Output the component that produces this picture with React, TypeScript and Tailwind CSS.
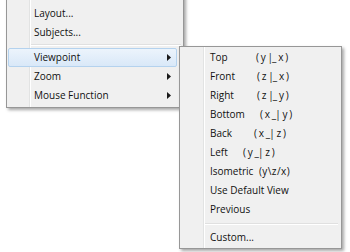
import { Fragment } from 'react';

type MenuItem = {
  label: string;
  sub?: boolean;
  active?: boolean;
  sep?: boolean;
};

type ViewItem = {
  label: string;
  axes?: string;
  labelWidth?: string;
  sep?: boolean;
};

const mainItems: MenuItem[] = [
  { label: 'Layout...' },
  { label: 'Subjects...' },
  { label: '', sep: true },
  { label: 'Viewpoint', sub: true, active: true },
  { label: 'Zoom', sub: true },
  { label: 'Mouse Function', sub: true },
];

const viewItems: ViewItem[] = [
  { label: 'Top', axes: '(y|_x)', labelWidth: 'w-[46px]' },
  { label: 'Front', axes: '(z|_x)', labelWidth: 'w-[47px]' },
  { label: 'Right', axes: '(z|_y)', labelWidth: 'w-[47px]' },
  { label: 'Bottom', axes: '(x_|y)', labelWidth: 'w-[50px]' },
  { label: 'Back', axes: '(x_|z)', labelWidth: 'w-[44px]' },
  { label: 'Left', axes: '(y_|z)', labelWidth: 'w-[33px]' },
  { label: 'Isometric', axes: '(y\\z/x)', labelWidth: 'w-[49px]' },
  { label: 'Use Default View' },
  { label: 'Previous' },
  { label: '', sep: true },
  { label: 'Custom...' },
];

// the |_ pairs sit tight together, the rest is spaced out
function Axes({ text }: { text: string }) {
  const chars = text.split('');
  const iso = text.includes('/');
  return (
    <span className="shrink-0 whitespace-nowrap">
      {chars.map((c, i) => {
        const next = chars[i + 1];
        const tight = (c === '|' && next === '_') || (c === '_' && next === '|');
        const cls = iso ? 'tracking-[0.4px]' : tight ? 'tracking-[-1px]' : 'tracking-[1.8px]';
        return (
          <span key={i} className={cls}>
            {c}
          </span>
        );
      })}
    </span>
  );
}

function Arrow() {
  return (
    <svg width="4" height="7" viewBox="0 0 4 7" className="shrink-0">
      <path d="M0 0 L4 3.5 L0 7 Z" fill="#1a1a1a" />
    </svg>
  );
}

export default function App() {
  return (
    <div
      className="relative w-[350px] h-[252px] overflow-hidden bg-white text-[10px] font-medium text-[#111]"
      style={{ fontFamily: '"Open Sans", "Noto Sans", sans-serif' }}
    >
      {/* main context menu */}
      <div className="absolute left-[6px] top-[-10px] w-[178px] border border-[#979797] bg-[#f0f0f0] pt-[13px] pb-[2px] shadow-[2px_2px_3px_rgba(0,0,0,0.35)]">
        <div className="absolute left-[22px] top-0 bottom-0 w-[2px] border-l border-[#e2e3e3] bg-white" />
        {mainItems.map((item, i) =>
          item.sep ? (
            <div key={i} className="relative h-[6px] ml-[24px] mr-[2px] flex items-center">
              <div className="w-full h-[2px] border-t border-[#e0e0e0] bg-white" />
            </div>
          ) : (
            <div
              key={i}
              className={
                item.active
                  ? 'relative h-[19px] ml-[1px] mr-[6px] flex items-center pl-[25px] pr-[5px] rounded-[2px] border border-[#b4d2ee] bg-gradient-to-b from-[#ecf4fc] to-[#d9e8f8]'
                  : 'relative h-[19px] ml-[1px] mr-[6px] flex items-center pl-[26px] pr-[6px]'
              }
            >
              <span className="flex-1">{item.label}</span>
              {item.sub && <Arrow />}
            </div>
          )
        )}
      </div>

      {/* viewpoint submenu */}
      <div className="absolute left-[179px] top-[46px] w-[163px] border border-[#979797] bg-[#f0f0f0] py-[1px] shadow-[2px_2px_3px_rgba(0,0,0,0.35)]">
        <div className="absolute left-[23px] top-0 bottom-0 w-[2px] border-l border-[#e2e3e3] bg-white" />
        {viewItems.map((item, i) => (
          <Fragment key={i}>
            {item.sep ? (
              <div className="relative h-[9px] ml-[25px] mr-[3px] flex items-center">
                <div className="w-full h-[2px] border-t border-[#e0e0e0] bg-white" />
              </div>
            ) : (
              <div className="relative h-[19px] flex items-center pl-[30px]">
                <span className={'shrink-0 whitespace-nowrap ' + (item.labelWidth ?? '')}>{item.label}</span>
                {item.axes && <Axes text={item.axes} />}
              </div>
            )}
          </Fragment>
        ))}
      </div>
    </div>
  );
}
